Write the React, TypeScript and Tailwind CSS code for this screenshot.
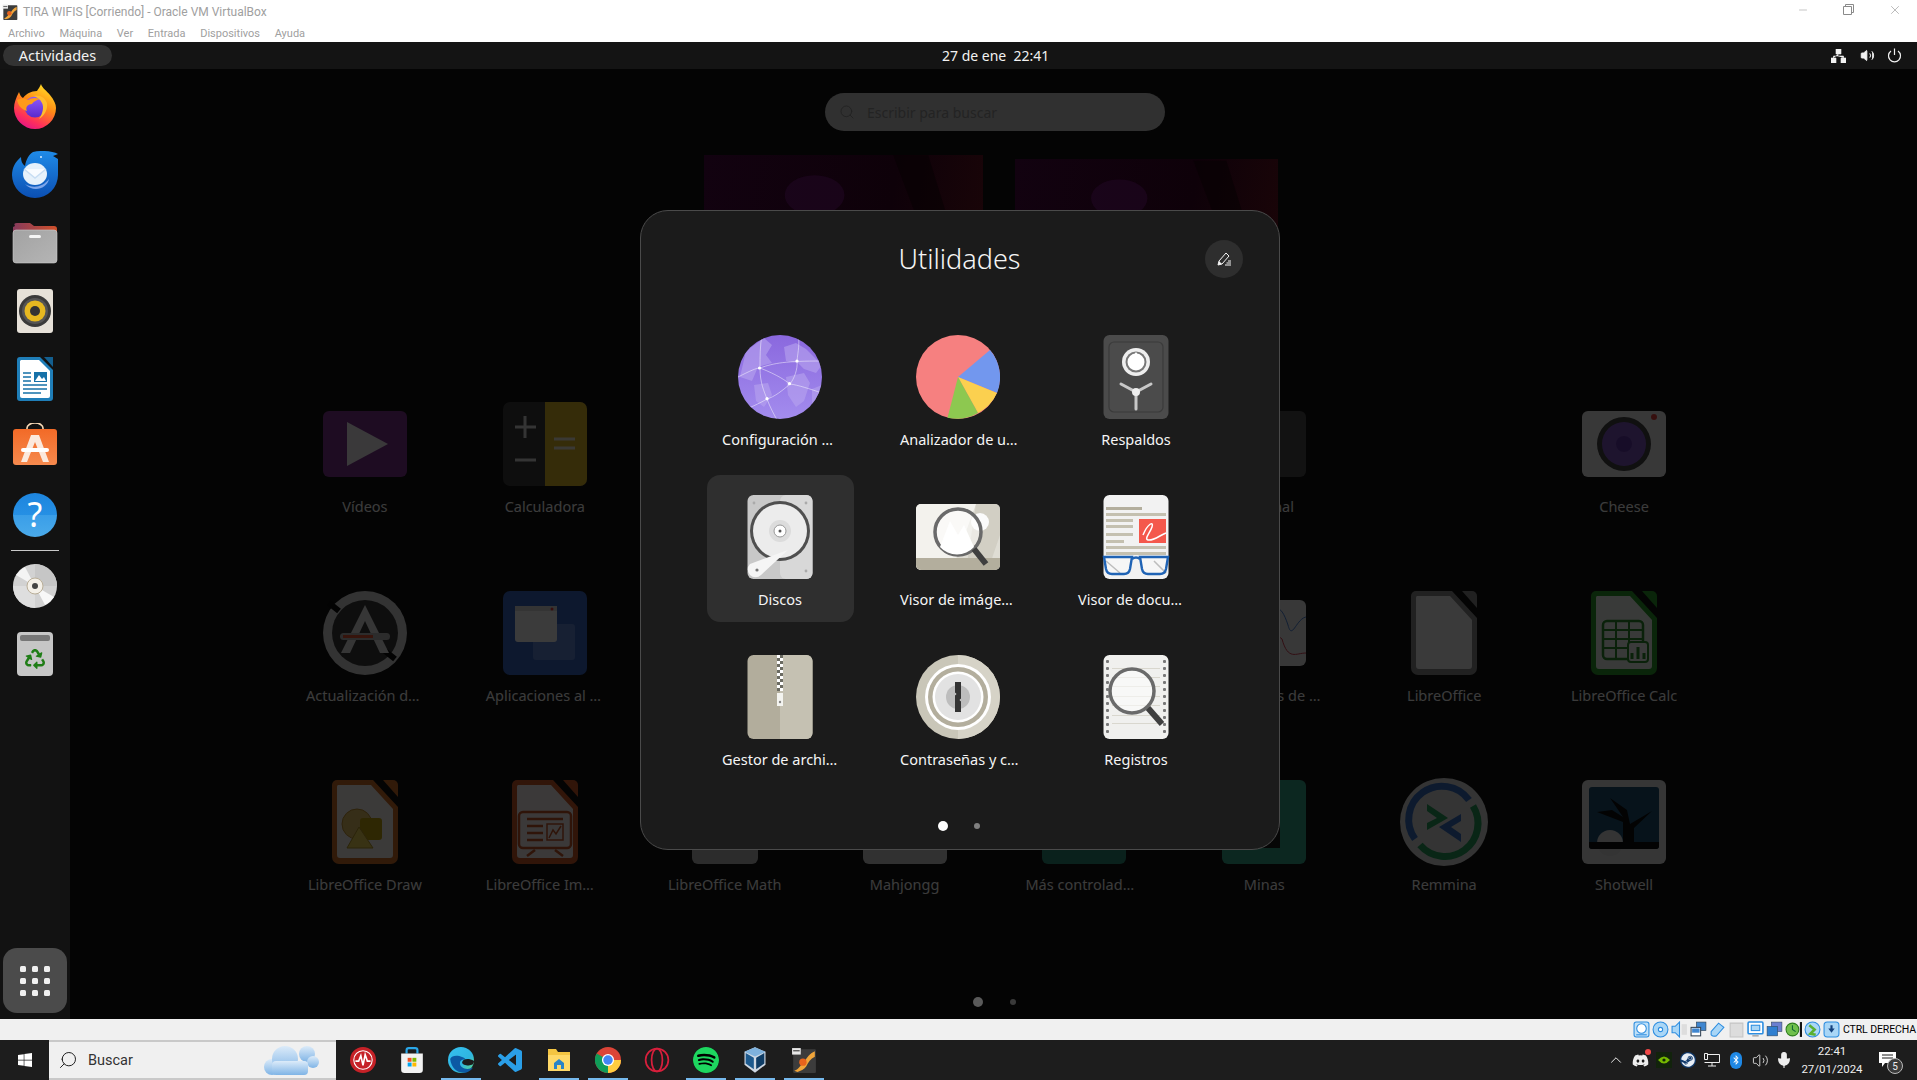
import React from "react";
import { FaDiscord, FaSteam, FaBluetoothB, FaSpotify, FaWindows, FaRecycle } from "react-icons/fa";
import { ChevronUp, Volume2, Mic, Search, Minus, X } from "lucide-react";

const Svg = ({ s = 84, v = 84, children, className = "" }: { s?: number; v?: number; children: React.ReactNode; className?: string }) => (
  <svg width={s} height={s} viewBox={`0 0 ${v} ${v}`} className={`block shrink-0 ${className}`}>{children}</svg>
);

/* ---------- modal icons ---------- */
const Globe = () => (
  <Svg>
    <defs>
      <linearGradient id="gl" x1="0" y1="0" x2="0" y2="1"><stop offset="0" stopColor="#8a68de" /><stop offset="1" stopColor="#a38cee" /></linearGradient>
      <clipPath id="glc"><circle cx="42" cy="42" r="42" /></clipPath>
    </defs>
    <circle cx="42" cy="42" r="42" fill="url(#gl)" />
    <g clipPath="url(#glc)">
      <path d="M8 16 L26 3 L34 10 L28 20 L34 28 L20 32 L14 46 L2 42Z M16 50 L30 48 L34 60 L26 72 L18 66Z M46 12 L58 8 L68 14 L84 30 L78 38 L66 34 L60 28 L48 26Z M48 42 L66 38 L72 48 L66 66 L58 72 L50 60Z M74 54 L84 50 L82 68 L74 72Z" fill="#b7a3ee" opacity=".6" />
      <path d="M0 42 C12 36 18 33 22 33 C36 28 48 26 84 26 M22 33 C40 40 48 46 52 49 C60 50 72 54 84 58 M52 49 C44 56 36 62 29 64 C22 68 10 74 2 76 M22 33 C22 48 26 56 29 64 C32 72 36 80 42 90 M59 26 C60 34 56 44 52 49 M22 33 C22 22 22 10 24 0 M59 26 C60 16 62 8 60 0" stroke="#fff" strokeOpacity=".6" strokeWidth=".8" fill="none" />
    </g>
    <circle cx="21.5" cy="33" r="1.6" fill="#fff" /><circle cx="59" cy="26" r="1.6" fill="#fff" /><circle cx="51.5" cy="48.7" r="1.6" fill="#fff" /><circle cx="29" cy="63.7" r="1.6" fill="#fff" />
  </Svg>
);
const Pie = () => (
  <Svg>
    <circle cx="42" cy="42" r="42" fill="#f68080" />
    <path d="M42 42 L74 15 A42 42 0 0 1 81 58Z" fill="#7297ee" />
    <path d="M42 42 L81 58 A42 42 0 0 1 62 78Z" fill="#fbd04f" />
    <path d="M42 42 L62 78 A42 42 0 0 1 31.5 82.7Z" fill="#8dc850" />
  </Svg>
);
const Backup = () => (
  <Svg>
    <rect x="9.5" y="0" width="65" height="84" rx="6" fill="#4b4b4b" />
    <rect x="15" y="7" width="54" height="70" rx="5" fill="none" stroke="#3b3b3b" strokeWidth="1.2" />
    <circle cx="42" cy="27" r="14" fill="#eeeeee" /><circle cx="42" cy="27" r="10.5" fill="#777" /><circle cx="42" cy="27" r="8.5" fill="#fff" />
    <path d="M42 17 l3 4 h-6z" fill="#fff" />
    <path d="M27 49 L42 57 L57 49 M42 57 V74" stroke="#c8c8c8" strokeWidth="3" fill="none" strokeLinecap="round" />
    <circle cx="42" cy="57" r="4" fill="#eee" />
  </Svg>
);
const Disks = () => (
  <Svg>
    <rect x="9.5" y="0" width="65" height="84" rx="6" fill="#c8c8c8" />
    <rect x="42" y="0" width="32.5" height="84" rx="6" fill="#d8d8d8" />
    <circle cx="42" cy="36" r="30" fill="#4f4f4f" /><circle cx="42" cy="36" r="27" fill="#ececec" />
    <circle cx="42" cy="36" r="11" fill="#dcdcdc" /><circle cx="42" cy="36" r="6" fill="#fff" stroke="#999" /><circle cx="42" cy="36" r="1.5" fill="#555" />
    <path d="M12 69 L50 55 L23 80 A7 7 0 0 1 12 69Z" fill="#f5f5f5" />
    <circle cx="19" cy="75" r="1.6" fill="#777" />
    <circle cx="16" cy="8" r="1.4" fill="#aaa" /><circle cx="68" cy="8" r="1.4" fill="#aaa" /><circle cx="68" cy="76" r="1.4" fill="#aaa" />
  </Svg>
);
const ImageViewer = () => (
  <Svg>
    <rect x="0" y="9" width="84" height="66" rx="5" fill="#dfddd4" />
    <path d="M5 9 H60 L36 75 H5 A5 5 0 0 1 0 70 V14 A5 5 0 0 1 5 9Z" fill="#f3f2ed" />
    <path d="M60 9 H79 A5 5 0 0 1 84 14 V40 L72 75 H50Z" fill="#ccc9bd" opacity=".7" />
    <path d="M0 63 H84 V70 A5 5 0 0 1 79 75 H5 A5 5 0 0 1 0 70Z" fill="#b3ae9d" />
    <circle cx="64" cy="27" r="9" fill="#fbfbfb" />
    <circle cx="42" cy="37" r="23" fill="#fff" fillOpacity=".55" stroke="#6a6a6a" strokeWidth="3.5" />
    <path d="M24 52 L34 26 L42 40 L48 30 L58 52 A23 23 0 0 1 24 52Z" fill="#fff" />
    <path d="M58 54 L70 69" stroke="#3f3f3f" strokeWidth="6" />
  </Svg>
);
const DocViewer = () => (
  <Svg>
    <rect x="9.5" y="0" width="65" height="84" rx="6" fill="#f2f2f2" />
    <g fill="#c4c0b0">
      <rect x="12" y="12" width="36" height="3" fill="#b3ae9d" /><rect x="12" y="18" width="60" height="3" /><rect x="12" y="24" width="27" height="3" /><rect x="12" y="30" width="27" height="3" /><rect x="12" y="38" width="27" height="3" /><rect x="12" y="45" width="18" height="3" /><rect x="12" y="51" width="60" height="3" /><rect x="12" y="57" width="60" height="3" />
    </g>
    <rect x="45" y="24" width="27" height="24" fill="#f4584c" />
    <path d="M49 40 C54 28 60 26 58 32 C56 38 50 44 54 45 C60 46 66 40 72 38" stroke="#fff" strokeWidth="1.5" fill="none" />
    <path d="M12 66 L26 78 M60 66 L72 78" stroke="#9a9a9a" strokeWidth="1.5" />
    <path d="M10 62 H38 L36 74 Q35 79 30 79 H18 Q13 79 12 74Z" fill="#fff" fillOpacity=".35" stroke="#1f63b5" strokeWidth="2.4" />
    <path d="M46 62 H74 L72 74 Q71 79 66 79 H54 Q49 79 48 74Z" fill="#fff" fillOpacity=".35" stroke="#1f63b5" strokeWidth="2.4" />
    <path d="M38 64 Q42 61 46 64" stroke="#1f63b5" strokeWidth="2.4" fill="none" />
  </Svg>
);
const Archive = () => (
  <Svg>
    <rect x="9.5" y="0" width="65" height="84" rx="6" fill="#b2ad9c" />
    <path d="M42 0 H68.5 A6 6 0 0 1 74.5 6 V78 A6 6 0 0 1 68.5 84 H42Z" fill="#c5c1b2" />
    <g fill="#fff"><rect x="39" y="0" width="3" height="3" /><rect x="42" y="3" width="3" height="3" /><rect x="39" y="6" width="3" height="3" /><rect x="42" y="9" width="3" height="3" /><rect x="39" y="12" width="3" height="3" /><rect x="42" y="15" width="3" height="3" /><rect x="39" y="18" width="3" height="3" /><rect x="42" y="21" width="3" height="3" /><rect x="39" y="24" width="3" height="3" /><rect x="42" y="27" width="3" height="3" /><rect x="39" y="30" width="3" height="3" /><rect x="42" y="33" width="3" height="3" /></g>
    <g fill="#6b6b62"><rect x="42" y="0" width="3" height="3" /><rect x="39" y="3" width="3" height="3" /><rect x="42" y="6" width="3" height="3" /><rect x="39" y="9" width="3" height="3" /><rect x="42" y="12" width="3" height="3" /><rect x="39" y="15" width="3" height="3" /><rect x="42" y="18" width="3" height="3" /><rect x="39" y="21" width="3" height="3" /><rect x="42" y="24" width="3" height="3" /><rect x="39" y="27" width="3" height="3" /><rect x="42" y="30" width="3" height="3" /><rect x="39" y="33" width="3" height="3" /></g>
    <rect x="39" y="38" width="6" height="13" fill="#f4f4f0" /><circle cx="42" cy="47" r="1.2" fill="#888" />
  </Svg>
);
const Passwords = () => (
  <Svg>
    <circle cx="42" cy="42" r="42" fill="#c9c6b8" />
    <path d="M42 0 A42 42 0 0 1 42 84Z" fill="#d6d3c7" />
    <circle cx="42" cy="42" r="33" fill="#fff" /><circle cx="42" cy="42" r="30" fill="#b3ae9d" /><circle cx="42" cy="42" r="25.5" fill="#fff" /><circle cx="42" cy="42" r="23" fill="#e2e2e2" />
    <circle cx="42" cy="42" r="12" fill="#bdbdbd" />
    <rect x="39" y="27" width="6" height="30" fill="#333" />
    <circle cx="39" cy="39" r="1.3" fill="#bbb" /><circle cx="45" cy="45" r="1.3" fill="#bbb" />
  </Svg>
);
const Logs = () => (
  <Svg>
    <rect x="9.5" y="0" width="65" height="84" rx="6" fill="#f0f0ee" />
    {[5, 12, 19, 26, 33, 40, 47, 54, 61, 68, 75].map((y) => (
      <g key={y} fill="#777"><rect x="12" y={y} width="3" height="3" rx="1" /><rect x="69" y={y} width="3" height="3" rx="1" /></g>
    ))}
    <g fill="#d9d7ce"><rect x="18" y="13" width="48" height="1" /><rect x="18" y="22" width="48" height="1" /><rect x="18" y="31" width="48" height="1" /><rect x="18" y="41" width="48" height="1" /><rect x="18" y="50" width="48" height="1" /><rect x="18" y="60" width="48" height="1" /><rect x="18" y="68" width="48" height="1" /></g>
    <circle cx="38" cy="36" r="22" fill="#fff" fillOpacity=".55" stroke="#6a6a6a" strokeWidth="3.5" />
    <path d="M54 53 L68 69" stroke="#3f3f3f" strokeWidth="6" />
  </Svg>
);

/* ---------- dimmed grid icons ---------- */
const LoPage = ({ c, children }: { c: string; children?: React.ReactNode }) => (
  <Svg>
    <path d="M14 0 H50 L75 27 V77 A7 7 0 0 1 68 84 H16 A7 7 0 0 1 9 77 V5 A5 5 0 0 1 14 0Z" fill={c} />
    <path d="M15 5 H48 L70 29 V75 A3 3 0 0 1 67 78 H17 A3 3 0 0 1 14 75 V7 A2 2 0 0 1 15 5Z" fill="#fff" opacity=".95" />
    <path d="M60 0 H70 A5 5 0 0 1 75 5 V17Z" fill={c} />
    {children}
  </Svg>
);
const Videos = () => (
  <Svg>
    <rect x="0" y="9" width="84" height="66" rx="6" fill="#7b2a8c" />
    <path d="M24 20 L65 42 L24 64Z" fill="#fff" opacity=".95" />
  </Svg>
);
const Calculator = () => (
  <Svg>
    <rect x="0" y="0" width="84" height="84" rx="7" fill="#333" />
    <path d="M42 0 H77 A7 7 0 0 1 84 7 V77 A7 7 0 0 1 77 84 H42Z" fill="#e3b81e" />
    <path d="M12 25 H33 M22 14 V36 M12 58 H33" stroke="#ddd" strokeWidth="3" />
    <path d="M51 37 H72 M51 46 H72" stroke="#fff" strokeOpacity=".85" strokeWidth="3.2" />
  </Svg>
);
const Updater = () => (
  <Svg>
    <circle cx="42" cy="42" r="42" fill="#d8d8d8" />
    <circle cx="42" cy="42" r="33" fill="#333" />
    <path d="M6 12 L16 20 M72 68 L62 60" stroke="#000" strokeWidth="6" />
    <path d="M42 14 L66 62 H57 L42 30 L27 62 H18Z" fill="#e6e6e6" />
    <rect x="17" y="42" width="50" height="7" rx="3.5" fill="#bbb" /><rect x="20" y="44" width="30" height="3" fill="#e5502a" />
  </Svg>
);
const Apps = () => (
  <Svg>
    <rect width="84" height="84" rx="7" fill="#2f5fc2" />
    <rect x="30" y="33" width="42" height="36" rx="3" fill="#5a84d8" />
    <rect x="12" y="15" width="42" height="36" rx="3" fill="#fff" />
    <rect x="12" y="15" width="42" height="5" fill="#ddd" /><circle cx="49" cy="18" r="1.5" fill="#e33" />
  </Svg>
);
const Terminal = () => (<Svg><rect y="9" width="84" height="66" rx="6" fill="#444" /></Svg>);
const Stats = () => (
  <Svg>
    <rect y="9" width="84" height="66" rx="6" fill="#f0f0f0" />
    <path d="M40 36 C52 14 58 10 66 34 C70 50 74 28 84 26" stroke="#3d7bd8" fill="none" />
    <path d="M40 40 C48 60 52 40 60 48 C66 70 74 62 84 62" stroke="#d3344a" fill="none" />
  </Svg>
);
const Cheese = () => (
  <Svg>
    <rect y="9" width="84" height="66" rx="6" fill="#f2f2f2" />
    <circle cx="42" cy="42" r="27" fill="#3a3a3a" /><circle cx="42" cy="42" r="22" fill="#7c4fc4" /><circle cx="42" cy="42" r="8" fill="#5c2ea8" />
    <circle cx="72" cy="15" r="3" fill="#e53935" />
  </Svg>
);
const Remmina = () => (
  <svg width="88" height="88" viewBox="-2 -2 88 88" className="block shrink-0 -m-[2px]">
    <circle cx="42" cy="42" r="44" fill="#dcdcdc" />
    <path d="M13 59 A33 33 0 0 1 67 20" fill="none" stroke="#2d6bc4" strokeWidth="7" />
    <path d="M71 26 A33 33 0 0 1 18 65" fill="none" stroke="#1b9e55" strokeWidth="7" />
    <path d="M25 24 L46 38 L25 50 V43 L35 38 L25 31Z" fill="#1b9e55" />
    <path d="M59 34 L37 47 L59 62 V54 L49 47 L59 41Z" fill="#2d6bc4" />
  </svg>
);
const Shotwell = () => (
  <Svg>
    <rect width="84" height="84" rx="6" fill="#e8e8e8" />
    <rect x="7" y="7" width="70" height="62" rx="3" fill="#12496e" />
    <circle cx="28" cy="63" r="13" fill="#ddd" />
    <path d="M7 62 H77 V66 A3 3 0 0 1 74 69 H10 A3 3 0 0 1 7 66Z" fill="#000" />
    <path d="M41 62 V42 L15 32 L30 30 L41 37 L28 18 L45 30 L48 44 L70 31 L52 48 V62Z" fill="#000" />
  </Svg>
);
const Gray = () => (<Svg><rect x="9" width="66" height="84" rx="6" fill="#bbb" /></Svg>);
const Mahjong = () => (<Svg><rect y="0" width="84" height="84" rx="6" fill="#d0d0d0" /></Svg>);
const More = () => (<Svg><rect y="0" width="84" height="84" rx="6" fill="#1f8a70" /></Svg>);
const Mines = () => (
  <Svg>
    <rect width="84" height="84" rx="6" fill="#2aa386" />
    <path d="M30 30 H58 V68 H20" fill="#111" />
  </Svg>
);

const Draw = () => (
  <LoPage c="#d1681e">
    <circle cx="34" cy="44" r="15" fill="#e7c15e" stroke="#c08f2a" /><rect x="37" y="38" width="22" height="22" rx="3" fill="#c5a400" />
    <path d="M36 47 L50 68 H24Z" fill="#f2d44f" stroke="#b3951f" strokeLinejoin="round" />
  </LoPage>
);
const Impress = () => (
  <LoPage c="#d1521e">
    <rect x="16" y="32" width="52" height="36" rx="4" fill="none" stroke="#c64c1c" strokeWidth="2.5" />
    <path d="M24 39 H60 M24 46 H40 M24 53 H40 M24 60 H40 M32 70 L24 76 M52 70 L60 76" stroke="#c64c1c" strokeWidth="2.5" />
    <rect x="44" y="44" width="16" height="16" fill="none" stroke="#c64c1c" strokeWidth="1.5" />
    <path d="M46 58 L50 50 L53 54 L58 46" stroke="#c64c1c" fill="none" strokeWidth="1.5" />
  </LoPage>
);
const Office = () => <LoPage c="#888" />;
const CalcDoc = () => (
  <LoPage c="#1f9a1f">
    <rect x="21" y="30" width="40" height="38" rx="4" fill="none" stroke="#1f8a1f" strokeWidth="2.5" />
    <path d="M21 39 H61 M21 48 H61 M21 57 H61 M34 30 V68 M47 30 V68" stroke="#1f8a1f" strokeWidth="2" />
    <rect x="46" y="51" width="20" height="20" rx="3" fill="#fff" stroke="#1f8a1f" strokeWidth="2" />
    <path d="M50 68 V62 M56 68 V56 M62 68 V62" stroke="#1f8a1f" strokeWidth="3" />
  </LoPage>
);

/* ---------- dock icons ---------- */
const Firefox = () => (
  <Svg s={48} v={48}>
    <defs>
      <linearGradient id="ffa" x1=".8" y1="0" x2=".3" y2="1"><stop offset="0" stopColor="#ffe226" /><stop offset=".45" stopColor="#ff8a16" /><stop offset=".8" stopColor="#ff2f5b" /><stop offset="1" stopColor="#e31587" /></linearGradient>
      <linearGradient id="ffb" x1=".5" y1="0" x2=".5" y2="1"><stop offset="0" stopColor="#9059ff" /><stop offset="1" stopColor="#592acb" /></linearGradient>
    </defs>
    <path d="M30 1 C31 5 36 8 39 12 C43 17 45 21 45 25 A21 21 0 0 1 3 25 C3 20 5 15 8 9 C9 12 10 14 12 15 C15 11 20 8 26 8 C27 6 29 4 30 1Z" fill="url(#ffa)" />
    <circle cx="24" cy="24" r="10.5" fill="url(#ffb)" />
    <path d="M6 17 C10 15 13 15 17 17 C20 15 24 14 29 16 C25 17 22 19 21 21 C17 21 14 24 16 28 C10 26 7 22 6 17Z" fill="#ff9a1a" />
    <path d="M22 13 C28 11 34 14 36 20 C37 27 33 33 28 36 C32 30 33 24 31 20 C29 16 26 14 22 13Z" fill="#ffbd2e" />
  </Svg>
);
const Thunderbird = () => (
  <Svg s={48} v={48}>
    <defs><linearGradient id="tb" x1="0" y1="0" x2="0" y2="1"><stop offset="0" stopColor="#1f8be8" /><stop offset="1" stopColor="#0b4fb3" /></linearGradient></defs>
    <path d="M22 1 C30 -1 42 0 47 3 L42 5 L47 8 C47 12 47 18 47 24 A23 23 0 0 1 1 24 C1 17 4 11 10 6 C10 10 11 13 14 15 C15 9 18 3 22 1Z" fill="url(#tb)" />
    <ellipse cx="24" cy="23" rx="12" ry="11" fill="#e6f1fb" />
    <path d="M13 18 L24 27 L35 18" stroke="#c7ddf3" strokeWidth="1.5" fill="#f8fbff" />
    <path d="M14 33 C22 38 32 36 38 28 C36 38 22 42 14 33Z" fill="#7ea6ea" />
    <circle cx="30" cy="6" r="1" fill="#d7ecff" />
  </Svg>
);
const FilesIcon = () => (
  <Svg s={48} v={48}>
    <defs>
      <linearGradient id="fo" x1="0" y1="0" x2="1" y2="0"><stop offset="0" stopColor="#863a5c" /><stop offset="1" stopColor="#d0502a" /></linearGradient>
      <linearGradient id="fg" x1="0" y1="0" x2="1" y2="1"><stop offset="0" stopColor="#a2a2a2" /><stop offset="1" stopColor="#b5b5b5" /></linearGradient>
    </defs>
    <path d="M4 7 Q2 4 6 4 H19 L23 7 H43 A3 3 0 0 1 46 10 V16 H2 V8Z" fill="url(#fo)" />
    <rect x="2" y="11" width="44" height="33" rx="3" fill="url(#fg)" stroke="#cfcfcf" strokeWidth=".6" />
    <rect x="18" y="16" width="12" height="3" rx="1.5" fill="#f5f5f5" />
  </Svg>
);
const Rhythm = () => (
  <Svg s={48} v={48}>
    <rect x="6" y="2" width="36" height="44" rx="3" fill="#e6e1d8" />
    <circle cx="24" cy="24" r="16" fill="#3a3a3a" /><circle cx="24" cy="24" r="13" fill="#555" /><circle cx="24" cy="24" r="10.5" fill="#e6b820" /><circle cx="24" cy="24" r="5" fill="#333" />
  </Svg>
);
const Writer = () => (
  <Svg s={48} v={48}>
    <path d="M9 2 H29 L42 15 V43 A3 3 0 0 1 39 46 H9 A3 3 0 0 1 6 43 V5 A3 3 0 0 1 9 2Z" fill="#1f7eb8" />
    <path d="M10 5 H28 L39 16 V41 A2 2 0 0 1 37 43 H11 A2 2 0 0 1 9 41 V6Z" fill="#fff" />
    <path d="M33 2 H42 V12Z" fill="#135f8f" />
    <path d="M12 18 H20 M12 22 H20 M12 26 H20 M12 30 H36 M12 34 H36 M12 38 H30" stroke="#1671a8" strokeWidth="1.6" />
    <rect x="23" y="17" width="13" height="10" fill="#1671a8" />
    <path d="M24 26 L28 20 L31 24 L33 22 L35 26Z" fill="#fff" />
  </Svg>
);
const StoreIcon = () => (
  <Svg s={48} v={48}>
    <defs><linearGradient id="st" x1="0" y1="0" x2="0" y2="1"><stop offset="0" stopColor="#f26a27" /><stop offset="1" stopColor="#f68a4e" /></linearGradient></defs>
    <path d="M16 8 V5 A8 5 0 0 1 32 5 V8" stroke="#f7d8b5" strokeWidth="1.6" fill="none" />
    <rect x="2" y="6" width="44" height="36" rx="3" fill="url(#st)" />
    <path d="M20 12 H28 L38 39 H32 L24 19 L16 39 H10Z" fill="#fbe9dd" />
    <rect x="10" y="25" width="28" height="4" rx="2" fill="#fff" />
  </Svg>
);
const Help = () => (
  <Svg s={48} v={48}>
    <defs><linearGradient id="hp" x1="0" y1="0" x2="0" y2="1"><stop offset="0" stopColor="#1d85de" /><stop offset=".5" stopColor="#2690e4" /><stop offset=".5" stopColor="#3a9ee8" /><stop offset="1" stopColor="#4aaaea" /></linearGradient></defs>
    <circle cx="24" cy="24" r="22" fill="url(#hp)" />
    <text x="24" y="36" textAnchor="middle" fontSize="34" fill="#fff" fontFamily="'Noto Sans',sans-serif">?</text>
  </Svg>
);
const Disc = () => (
  <Svg s={48} v={48}>
    <circle cx="24" cy="24" r="22" fill="#d2d2d2" />
    <path d="M24 24 V2 A22 22 0 0 1 46 24Z" fill="#c6c6c6" />
    <path d="M24 24 V46 A22 22 0 0 1 2 24Z" fill="#dedede" />
    <path d="M24 24 L5 13 A22 22 0 0 1 14 5Z" fill="#f4f4f4" /><path d="M24 24 L43 35 A22 22 0 0 1 34 43Z" fill="#f8f8f8" />
    <circle cx="24" cy="24" r="8" fill="#f4f0e8" stroke="#b9ae98" /><circle cx="24" cy="24" r="3" fill="#444" />
  </Svg>
);
const Trash = () => (
  <Svg s={48} v={48}>
    <rect x="6" y="2" width="36" height="44" rx="4" fill="#c6c6c6" />
    <rect x="9" y="5" width="30" height="6" rx="2" fill="#777" />
    <FaRecycle x={14} y={19} size={20} color="#1f7d16" />
  </Svg>
);
const AppGrid = () => (
  <div className="grid grid-cols-3 gap-x-[6px] gap-y-[6px]">
    {Array.from({ length: 9 }).map((_, i) => <span key={i} className="w-[6px] h-[6px] rounded-[1.5px] bg-[#f0f0f0]" />)}
  </div>
);

/* ---------- windows icons ---------- */
const VmIcon = ({ s = 16 }: { s?: number }) => (
  <Svg s={s} v={24}>
    <rect x="2" y="2" width="21" height="22" rx="1" fill="#3c3c3c" />
    <path d="M3 22 C8 20 9 16 12 14 C15 10 17 6 22 4 V9 C18 11 16 14 14 18 C12 21 9 22 6 23Z" fill="#f0a53a" />
    <circle cx="11" cy="14" r="3.4" fill="#e8631c" />
    <rect x="1" y="1" width="8" height="6" fill="#e8e8e8" />
    <rect x="2" y="3" width="6" height="1" fill="#333" />
  </Svg>
);
const RedApp = () => (
  <Svg s={26} v={24}>
    <circle cx="12" cy="12" r="12" fill="#c62127" /><circle cx="12" cy="12" r="8.5" fill="none" stroke="#fff" strokeWidth="1" />
    <path d="M5 13 H8 L10 8 L12 17 L14 7 L16 13 H19" stroke="#fff" strokeWidth="1.5" fill="none" />
  </Svg>
);
const MsStore = () => (
  <Svg s={26} v={24}>
    <path d="M7 6 V3 A2 2 0 0 1 9 1 H15 A2 2 0 0 1 17 3 V6" stroke="#2aa7e8" strokeWidth="2" fill="none" />
    <path d="M2 6 H22 V21 A3 3 0 0 1 19 24 H5 A3 3 0 0 1 2 21Z" fill="#f2f2f2" />
    <rect x="8" y="10" width="3.6" height="3.6" fill="#f25022" /><rect x="12.4" y="10" width="3.6" height="3.6" fill="#7fba00" /><rect x="8" y="14.4" width="3.6" height="3.6" fill="#00a4ef" /><rect x="12.4" y="14.4" width="3.6" height="3.6" fill="#ffb900" />
  </Svg>
);
const Edge = () => (
  <Svg s={26} v={24}>
    <defs><linearGradient id="ed" x1="0" y1="0" x2="1" y2="1"><stop offset="0" stopColor="#35c1f1" /><stop offset=".6" stopColor="#2fb5e0" /><stop offset="1" stopColor="#66e07c" /></linearGradient></defs>
    <circle cx="12" cy="12" r="12" fill="url(#ed)" />
    <path d="M2 11 C3 20 10 25 17 23.5 C20 22.5 22 21 23 19 C17 22 11 19 11 15 C11 12 14 11 17 12 C14 8 4 6 2 11Z" fill="#0c59a4" />
    <path d="M13 14 C14 11 19 10 24 13 C24 16 22 17 19 17 C16 17 13 16 13 14Z" fill="#1c1c1c" />
  </Svg>
);
const VsCode = () => (
  <Svg s={24} v={24}>
    <path fill="#2a9fe8" d="M23.15 2.587L18.21.21a1.494 1.494 0 0 0-1.705.29l-9.46 8.63-4.12-3.128a.999.999 0 0 0-1.276.057L.327 7.261A1 1 0 0 0 .326 8.74L3.899 12 .326 15.26a1 1 0 0 0 .001 1.479L1.65 17.94a.999.999 0 0 0 1.276.057l4.12-3.128 9.46 8.63a1.492 1.492 0 0 0 1.704.29l4.942-2.377A1.5 1.5 0 0 0 24 20.06V3.939a1.5 1.5 0 0 0-.85-1.352zm-5.146 14.861L10.826 12l7.178-5.448v10.896z" />
  </Svg>
);
const WinFolder = () => (
  <Svg s={24} v={24}>
    <path d="M1 1 H9 L11 4 H23 V23 H1Z" fill="#f4c542" />
    <rect x="1" y="7" width="22" height="16" fill="#ffd968" />
    <path d="M7 15 L12 11 L17 15 V21 H14 V17 H10 V21 H7Z" fill="#2b84c7" />
  </Svg>
);
const Chrome = () => (
  <Svg s={26} v={24}>
    <circle cx="12" cy="12" r="12" fill="#db4437" />
    <path d="M12 12 L1.6 6 A12 12 0 0 0 12 24 L18 13.5Z" fill="#0f9d58" />
    <path d="M12 12 H24 A12 12 0 0 1 12 24Z" fill="#ffcd40" />
    <circle cx="12" cy="12" r="5.6" fill="#fff" /><circle cx="12" cy="12" r="4.4" fill="#4285f4" />
  </Svg>
);
const Opera = () => (
  <Svg s={26} v={24}>
    <circle cx="12" cy="12" r="10.5" fill="none" stroke="#d81f3c" strokeWidth="1.6" />
    <ellipse cx="12" cy="12" rx="5" ry="10.5" fill="none" stroke="#d81f3c" strokeWidth="1.6" />
  </Svg>
);
const Vbox = () => (
  <Svg s={28} v={24}>
    <path d="M12 1 L21 5 V16 L12 23 L3 16 V5Z" fill="#cfd8e3" />
    <path d="M12 1 L21 5 L12 9 L3 5Z" fill="#7fb2dd" />
    <path d="M4 6 L11 10 V20 L4 15Z" fill="#1d5a8e" /><path d="M20 6 L13 10 V20 L20 15Z" fill="#0f3d66" />
  </Svg>
);

/* ---------- small VM status icons ---------- */
const sb = "#2c8de0";
const StatusIcons = [
  <Svg key="a" s={17} v={16}><rect x="1" y="1" width="14" height="14" rx="2" fill="#bfe0f8" stroke={sb} /><circle cx="8" cy="7" r="4.5" fill="#fff" stroke={sb} /><path d="M3 13 H13" stroke={sb} /></Svg>,
  <Svg key="b" s={17} v={16}><circle cx="8" cy="8" r="7" fill="#a9d6f6" stroke={sb} /><circle cx="8" cy="8" r="2" fill="#fff" stroke={sb} /></Svg>,
  <Svg key="c" s={17} v={16}><path d="M1 5 H4 L8 1 V15 L4 11 H1Z" fill="#a9d6f6" stroke={sb} /><path d="M10 3 H15 V13 H10Z" fill="#ddd" /></Svg>,
  <Svg key="d" s={17} v={16}><rect x="6" y="1" width="9" height="8" fill="#3f86d0" stroke="#345" strokeWidth=".6" /><rect x="1" y="6" width="9" height="8" fill="#fff" stroke="#345" /><rect x="2" y="7" width="7" height="4" fill="#3f86d0" /></Svg>,
  <Svg key="e" s={17} v={16}><path d="M2 10 L9 2 L14 6 L7 14 Q3 15 2 13Z" fill="#a9d6f6" stroke={sb} /></Svg>,
  <Svg key="f" s={17} v={16}><path d="M2 2 H14 V15 H2Z" fill="#dcdcdc" stroke="#c4c4c4" /></Svg>,
  <Svg key="g" s={17} v={16}><rect x="1" y="1" width="14" height="11" rx="1" fill="#fff" stroke={sb} strokeWidth="1.5" /><rect x="4" y="4" width="8" height="5" fill="#a9d6f6" stroke={sb} /><path d="M5 14 H11" stroke="#888" /></Svg>,
  <Svg key="h" s={17} v={16}><rect x="5" y="1" width="10" height="9" fill="#6b7fd0" stroke="#345" strokeWidth=".5" /><rect x="1" y="5" width="10" height="9" fill="#2f7fd0" stroke="#345" strokeWidth=".5" /></Svg>,
  <Svg key="i" s={17} v={16}><circle cx="7" cy="8" r="6" fill="#6fc04c" stroke="#2e7d1c" /><path d="M7 4 V8 L10 10" stroke="#163" fill="none" /><rect x="14" y="1" width="2" height="14" fill="#111" /></Svg>,
  <Svg key="j" s={17} v={16}><circle cx="8" cy="8" r="7" fill="#a9d6f6" stroke={sb} /><path d="M5 4 L10 8 L6 12 L11 13" stroke="#5ab031" strokeWidth="2.4" fill="none" /></Svg>,
  <Svg key="k" s={17} v={16}><rect x="1" y="1" width="14" height="14" rx="3" fill="#a9d6f6" stroke={sb} /><path d="M5 7 H7 V4 H9 V7 H11 L8 11Z" fill="#14417d" /></Svg>,
];

/* ---------- data ---------- */
const modalApps: [string, React.ReactNode, boolean][] = [
  ["Configuración …", <Globe />, true],
  ["Analizador de u…", <Pie />, true],
  ["Respaldos", <Backup />, false],
  ["Discos", <Disks />, false],
  ["Visor de imáge…", <ImageViewer />, true],
  ["Visor de docu…", <DocViewer />, true],
  ["Gestor de archi…", <Archive />, true],
  ["Contraseñas y c…", <Passwords />, true],
  ["Registros", <Logs />, false],
];
const bgApps: ([string, React.ReactNode, boolean] | null)[] = [
  ["Vídeos", <Videos />, false], ["Calculadora", <Calculator />, false], null, null, null, ["Terminal", <Terminal />, false], null, ["Cheese", <Cheese />, false],
  ["Actualización d…", <Updater />, true], ["Aplicaciones al …", <Apps />, true], null, null, null, ["Estadísticas de …", <Stats />, true], ["LibreOffice", <Office />, false], ["LibreOffice Calc", <CalcDoc />, false],
  ["LibreOffice Draw", <Draw />, false], ["LibreOffice Im…", <Impress />, true], ["LibreOffice Math", <Gray />, false], ["Mahjongg", <Mahjong />, false], ["Más controlad…", <More />, true], ["Minas", <Mines />, false], ["Remmina", <Remmina />, false], ["Shotwell", <Shotwell />, false],
];
const dock = [<Firefox />, <Thunderbird />, <FilesIcon />, <Rhythm />, <Writer />, <StoreIcon />, <Help />];
const taskbar: [React.ReactNode, boolean][] = [
  [<RedApp />, false], [<MsStore />, false], [<Edge />, true], [<VsCode />, false], [<WinFolder />, true], [<Chrome />, true], [<Opera />, false],
  [<span className="flex w-[26px] h-[26px] rounded-full bg-black items-center justify-center"><FaSpotify size={28} color="#1ed760" /></span>, true], [<Vbox />, true], [<VmIcon s={26} />, true],
];
const ubuntu = "font-['Noto_Sans',sans-serif]";
const win = "font-['Roboto',sans-serif]";

const Wallpaper = ({ className }: { className: string }) => (
  <div className={`bg-[linear-gradient(100deg,#120210,#0e0109_65%,#1a0508)] overflow-hidden ${className}`}>
    <svg viewBox="0 0 280 120" className="w-full h-full block">
      <path d="M190 0 H225 L262 120 H235Z" fill="#060104" opacity=".6" />
      <ellipse cx="111" cy="40" rx="30" ry="20" fill="#25082b" opacity=".45" />
    </svg>
  </div>
);

export default function App() {
  return (
    <div className="relative w-[1917px] h-[1080px] overflow-hidden flex flex-col bg-[#040404]">
      {/* VirtualBox window chrome */}
      <header className={`h-[42px] shrink-0 bg-white ${win} text-[#a0a0a0]`}>
        <div className="h-[24px] flex items-center pl-[2px]">
          <VmIcon s={16} />
          <span className="ml-[5px] text-[12px]">TIRA WIFIS [Corriendo] - Oracle VM VirtualBox</span>
          <div className="ml-auto -mt-[5px] flex items-center text-[#8a8a8a]">
            <Minus size={12} strokeWidth={1} className="mr-[34px]" />
            <svg width="11" height="11" viewBox="0 0 11 11" className="mr-[34px]"><path d="M.5 2.5h8v8h-8zM2.5 2.5v-2h8v8h-2" fill="none" stroke="#8a8a8a" /></svg>
            <X size={14} strokeWidth={1} className="mr-[15px]" />
          </div>
        </div>
        <nav className="h-[18px] mt-px flex items-center gap-[14.7px] pl-[8px] text-[11px]">
          <span>Archivo</span><span>Máquina</span><span>Ver</span><span>Entrada</span><span>Dispositivos</span><span>Ayuda</span>
        </nav>
      </header>

      {/* GNOME top bar */}
      <div className={`h-[27px] shrink-0 bg-[#141414] flex items-center ${ubuntu} text-[#f2f2f2]`}>
        <div className="ml-[3px] w-[109px] h-[21px] rounded-full bg-[#333333] flex items-center justify-center text-[14.5px]">Actividades</div>
        <div className="ml-[830px] -mt-px text-[14px] whitespace-pre">27 de ene  22:41</div>
        <div className="ml-auto flex items-center mr-[15px]">
          <svg width="15" height="14" viewBox="0 0 15 14"><path d="M5 0h5v5H5zM0 9h5v5H0zM10 9h5v5h-5zM7 5v2H2.5v2M7 7h5.5v2" fill="#f2f2f2" stroke="#f2f2f2" strokeWidth=".6" /></svg>
          <Volume2 size={15} fill="#f2f2f2" strokeWidth={1.5} className="ml-[14px]" />
          <svg width="15" height="15" viewBox="0 0 15 15" className="ml-[12px]"><path d="M4 3A6 6 0 1 0 11 3M7.5 0.5V7" fill="none" stroke="#f2f2f2" strokeWidth="1.2" /></svg>
        </div>
      </div>

      {/* Desktop: dock + overview */}
      <div className="flex-1 flex min-h-0">
        <aside className="w-[70px] shrink-0 bg-[#121212] flex flex-col items-center pt-[4px]">
          {dock.map((ic, i) => <div key={i} className="h-[68px] flex items-center justify-center">{ic}</div>)}
          <div className="w-[48px] h-px bg-[#c8c8c8] my-px shrink-0" />
          <div className="h-[68px] flex items-center justify-center"><Disc /></div>
          <div className="h-[68px] flex items-center justify-center"><Trash /></div>
          <div className="mt-auto mb-[6px] w-[64px] h-[65px] rounded-[14px] bg-[#4b4b4b] flex items-center justify-center"><AppGrid /></div>
        </aside>

        <main className={`flex-1 min-w-0 flex flex-col ${ubuntu}`}>
          <div className="mt-[24px] ml-[755px] w-[340px] h-[38px] rounded-full bg-[#303030] flex items-center pl-[14px]">
            <Search size={16} color="#232323" strokeWidth={1.5} />
            <span className="ml-[12px] text-[14px] text-[#232323]">Escribir para buscar</span>
          </div>
          <div className="mt-[24px] h-[120px] flex items-start">
            <Wallpaper className="ml-[634px] w-[279px] h-[120px]" />
            <Wallpaper className="ml-[32px] mt-[4px] w-[263px] h-[116px]" />
          </div>
          <div className="mt-[127px] ml-[205px] w-[1439px] grid grid-cols-8 auto-rows-[189px] opacity-[0.22]">
            {bgApps.map((a, i) => (
              <div key={i} className="flex flex-col items-center">
                {a && <>{a[1]}<span className={`mt-[10px] h-[20px] leading-[20px] text-[14.5px] text-white whitespace-nowrap ${a[2] ? "w-[118px] text-left" : "text-center"}`}>{a[0]}</span></>}
              </div>
            ))}
          </div>
          <div className="mt-[28px] ml-[903px] flex items-center gap-[27px]">
            <span className="w-[10px] h-[10px] rounded-full bg-[#5a5a5a]" />
            <span className="w-[6px] h-[6px] rounded-full bg-[#3a3a3a]" />
          </div>
        </main>
      </div>

      {/* VM status bar */}
      <div className={`h-[21px] shrink-0 bg-[#f0f0f0] flex items-center pl-[1632px] ${win}`}>
        {StatusIcons.map((ic, i) => <div key={i} className="w-[19px] shrink-0 flex justify-center">{ic}</div>)}
        <span className="ml-[2px] text-[10.5px] tracking-[-0.1px] text-black whitespace-nowrap">CTRL DERECHA</span>
      </div>

      {/* Windows taskbar */}
      <footer className={`h-[40px] shrink-0 bg-[#1d1d1d] flex items-stretch ${win}`}>
        <div className="w-[49px] flex items-center justify-center"><FaWindows size={16} color="#fff" /></div>
        <div className="w-[287px] bg-[#f0f0f0] border-y-2 border-[#c9c9c9] flex items-center pl-[9px]">
          <Search size={20} color="#222" strokeWidth={1.2} className="-scale-x-100" />
          <span className="ml-[10px] mt-px text-[14.5px] text-[#333]">Buscar</span>
          <svg width="56" height="30" viewBox="0 0 56 30" className="ml-[130px]">
            <defs><linearGradient id="cl" x1="0" y1="0" x2="0" y2="1"><stop offset="0" stopColor="#dcebf9" /><stop offset="1" stopColor="#7fb4e6" /></linearGradient></defs>
            <g fill="url(#cl)"><circle cx="9" cy="22" r="8" /><circle cx="22" cy="14" r="13" /><circle cx="44" cy="9" r="8" /><circle cx="50" cy="17" r="6" /><rect x="9" y="16" width="36" height="14" rx="4" /></g>
          </svg>
        </div>
        <div className="ml-[2px] flex">
          {taskbar.map(([ic, on], i) => (
            <div key={i} className="relative w-[49px] flex items-center justify-center">
              {ic}
              {on && <span className="absolute bottom-0 left-[5px] w-[40px] h-[2px] bg-[#76b9ed]" />}
            </div>
          ))}
        </div>
        <div className="ml-auto mr-[11px] flex items-center text-[#eeeeee]">
          <div className="w-[24px] flex justify-center"><ChevronUp size={18} strokeWidth={1.3} /></div>
          <div className="relative w-[24px] flex justify-center"><FaDiscord size={17} /><span className="absolute -top-[3px] right-[1px] w-[6px] h-[6px] rounded-full bg-[#f04747]" /></div>
          <div className="w-[24px] flex justify-center"><span className="w-[16px] h-[16px] bg-[#12230c] flex items-center justify-center"><svg width="12" height="8" viewBox="0 0 12 8"><path d="M0 4Q6-3 12 4Q6 11 0 4Z" fill="#76b900" /><circle cx="6" cy="4" r="1.6" fill="#12230c" /></svg></span></div>
          <div className="w-[24px] flex justify-center"><span className="w-[16px] h-[16px] rounded-full bg-[#123a6b] flex items-center justify-center"><FaSteam size={14} color="#e8eef5" /></span></div>
          <div className="w-[24px] flex justify-center">
            <svg width="16" height="14" viewBox="0 0 16 14"><path d="M4 1.5h11.5v8H.5M8 9.5v3.5M4 13h8M.5.5h3v6h-3z" fill="none" stroke="#eee" /></svg>
          </div>
          <div className="w-[24px] flex justify-center"><span className="w-[12px] h-[17px] rounded-[6px] bg-[#1e88e5] flex items-center justify-center"><FaBluetoothB size={10} color="#fff" /></span></div>
          <div className="w-[24px] flex justify-center"><Volume2 size={17} strokeWidth={1.2} /></div>
          <div className="w-[24px] flex justify-center"><Mic size={18} strokeWidth={1.5} fill="#eee" /></div>
          <div className="w-[72px] flex flex-col items-center leading-[18px] text-[11.5px]"><span>22:41</span><span>27/01/2024</span></div>
          <div className="relative w-[38px] flex justify-center">
            <svg width="17" height="16" viewBox="0 0 17 16"><path d="M0 0h17v11H6l-3 4v-4H0z" fill="#fff" /><path d="M3 3h11M3 6h11" stroke="#1d1d1d" /></svg>
            <span className="absolute -bottom-[6px] right-[3px] w-[16px] h-[16px] rounded-full bg-[#3a3a3a] border border-[#bbb] text-[10px] flex items-center justify-center">5</span>
          </div>
        </div>
      </footer>

      {/* Open folder dialog */}
      <section className={`absolute left-[640px] top-[210px] w-[640px] h-[640px] rounded-[28px] bg-[#1b1b1b] border border-[#4a4a4a] ${ubuntu}`}>
        <div className="h-[68px] pt-[27px] grid grid-cols-[1fr_auto_1fr] items-center">
          <span />
          <h1 className="text-[27px] leading-[40px] font-light text-[#f5f5f5] -ml-[1px]">Utilidades</h1>
          <div className="justify-self-end mr-[36px] w-[38px] h-[38px] rounded-full bg-[#2e2e2e] flex items-center justify-center">
            <svg width="14" height="14" viewBox="0 0 14 14"><path d="M1 13 L2 9 L9 1 L12 4 L5 12Z" fill="none" stroke="#f5f5f5" /><path d="M1 13 L2 9 L5 12Z" fill="#f5f5f5" /><path d="M8 13h6M9.5 11h4.5M11 9h3" stroke="#f5f5f5" /></svg>
          </div>
        </div>
        <div className="mt-[36px] ml-[66px] grid grid-cols-[repeat(3,147px)] auto-rows-[147px] gap-x-[31px] gap-y-[13px]">
          {modalApps.map(([name, icon, cut], i) => (
            <div key={name} className={`flex flex-col items-center pt-[20px] pr-px rounded-[13px] ${i === 3 ? "bg-[#2f2f2f]" : ""}`}>
              {icon}
              <span className={`mt-[10px] h-[20px] leading-[20px] text-[14.5px] text-[#f5f5f5] whitespace-nowrap ${cut ? "w-[116px] text-left" : "text-center"}`}>{name}</span>
            </div>
          ))}
        </div>
        <div className="mt-[39px] pr-[3px] flex items-center justify-center gap-[26px]">
          <span className="w-[10px] h-[10px] rounded-full bg-white" />
          <span className="w-[6px] h-[6px] rounded-full bg-[#808080]" />
        </div>
      </section>
    </div>
  );
}
